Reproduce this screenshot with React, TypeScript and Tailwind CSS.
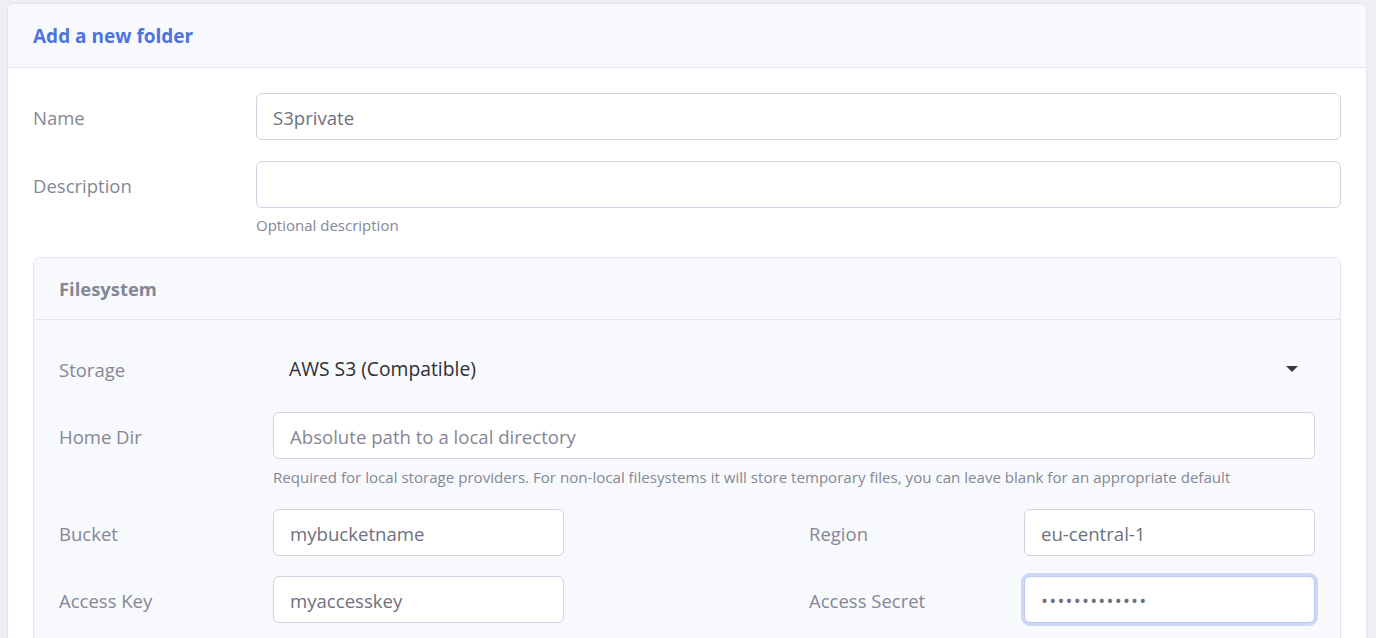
import React from 'react'

const font = { fontFamily: '"Open Sans", "Noto Sans", sans-serif' }

const inputCls =
  'h-[47px] w-full rounded-[6px] border border-[#d1d3e2] bg-white px-4 pt-[2px] text-[18.6px] text-[#6e707e] placeholder:text-[#858796] outline-none'

function Field({ value, placeholder, type = 'text', focused = false }: { value?: string; placeholder?: string; type?: string; focused?: boolean }) {
  return (
    <input
      readOnly
      type={type}
      defaultValue={value}
      placeholder={placeholder}
      className={
        focused
          ? 'h-[47px] w-full rounded-[6px] border border-[#bac8f3] bg-white px-4 pt-[2px] text-[18.6px] tracking-[1.2px] text-[#6e707e] shadow-[0_0_0_3px_rgba(78,115,223,0.25)] outline-none'
          : inputCls
      }
    />
  )
}

const labelCls = 'shrink-0 pt-[3px] text-[18.5px] text-[#858796]'

export default function App() {
  return (
    <div style={font} className="h-[638px] overflow-hidden bg-[#eeeff4] pl-[7px] pr-[9px] pt-[3px]">
      <div className="rounded-[6px] border border-[#e3e6f0] bg-white">
        {/* header */}
        <div className="flex h-[64px] items-center rounded-t-[6px] border-b border-[#e3e6f0] bg-[#f8f9fc] px-[25px]">
          <h6 className="pt-[1px] text-[19px] font-bold text-[#4e73df]">Add a new folder</h6>
        </div>

        <div className="px-[25px] pb-6 pt-[25px]">
          {/* name */}
          <div className="flex items-center">
            <label className={`w-[223px] ${labelCls}`}>Name</label>
            <Field value="S3private" />
          </div>

          {/* description */}
          <div className="mt-[21px] flex">
            <label className={`w-[223px] ${labelCls} pt-[11px]`}>Description</label>
            <div className="flex-1">
              <Field />
              <p className="mt-[6px] text-[15px] leading-[22px] text-[#858796]">Optional description</p>
            </div>
          </div>

          {/* filesystem */}
          <div className="mt-[21px] rounded-[6px] border border-[#e3e6f0] bg-[#f8f9fc]">
            <div className="flex h-[62px] items-center border-b border-[#e3e6f0] px-[25px]">
              <h6 className="pt-[1px] text-[18.4px] font-bold text-[#858796]">Filesystem</h6>
            </div>
            <div className="px-[25px] pb-8 pt-[25px]">
              {/* storage */}
              <div className="flex items-center">
                <label className={`w-[214px] ${labelCls}`}>Storage</label>
                <div className="relative flex h-[47px] flex-1 items-center pl-4 pt-[2px] text-[19.3px] text-[#2e2f37]">
                  AWS S3 (Compatible)
                  <svg className="absolute right-[17px] top-[21px]" width="12" height="6" viewBox="0 0 12 6">
                    <path d="M0 0h12L6 6z" fill="#343a40" />
                  </svg>
                </div>
              </div>

              {/* home dir */}
              <div className="mt-[20px] flex">
                <label className={`w-[214px] ${labelCls} pt-[11px]`}>Home Dir</label>
                <div className="flex-1">
                  <Field placeholder="Absolute path to a local directory" />
                  <p className="mt-[7px] text-[15.1px] leading-[22px] text-[#858796]">
                    Required for local storage providers. For non-local filesystems it will store temporary files, you can leave blank for an appropriate default
                  </p>
                </div>
              </div>

              {/* bucket / region */}
              <div className="mt-[21px] flex items-center">
                <label className={`w-[214px] ${labelCls}`}>Bucket</label>
                <div className="w-[291px] shrink-0">
                  <Field value="mybucketname" />
                </div>
                <label className={`ml-[245px] w-[215px] ${labelCls}`}>Region</label>
                <div className="w-[291px] shrink-0">
                  <Field value="eu-central-1" />
                </div>
              </div>

              {/* access key / secret */}
              <div className="mt-[20px] flex items-center">
                <label className={`w-[214px] ${labelCls}`}>Access Key</label>
                <div className="w-[291px] shrink-0">
                  <Field value="myaccesskey" />
                </div>
                <label className={`ml-[245px] w-[215px] ${labelCls}`}>Access Secret</label>
                <div className="w-[291px] shrink-0">
                  <Field type="password" value="secretsecret1" focused />
                </div>
              </div>
            </div>
          </div>
        </div>
      </div>
    </div>
  )
}
